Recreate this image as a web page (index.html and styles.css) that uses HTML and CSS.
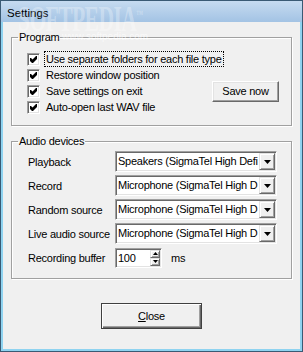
FILE: index.html
```html
<!DOCTYPE html>
<html lang="en">
<head>
    <meta charset="UTF-8">
    <title>Settings</title>
    <link rel="stylesheet" href="styles.css">
</head>
<body>
    <div class="window">
        <div class="titlebar"><span class="title">Settings</span></div>
        <div class="frame">
            <div class="client">
                <fieldset class="group">
                    <legend>Program</legend>
                    <div class="program-body">
                        <label class="check wide">
                            <span class="box"><svg width="7" height="7" viewBox="0 0 7 7"><polygon points="0,2 1,2 2.5,3.5 6,0 7,0 7,3 3,7 2,7 0,5" fill="#000"/></svg></span>
                            <span class="check-text focus">Use separate folders for each file type</span>
                        </label>
                        <label class="check">
                            <span class="box"><svg width="7" height="7" viewBox="0 0 7 7"><polygon points="0,2 1,2 2.5,3.5 6,0 7,0 7,3 3,7 2,7 0,5" fill="#000"/></svg></span>
                            <span class="check-text">Restore window position</span>
                        </label>
                        <label class="check">
                            <span class="box"><svg width="7" height="7" viewBox="0 0 7 7"><polygon points="0,2 1,2 2.5,3.5 6,0 7,0 7,3 3,7 2,7 0,5" fill="#000"/></svg></span>
                            <span class="check-text">Save settings on exit</span>
                        </label>
                        <label class="check">
                            <span class="box"><svg width="7" height="7" viewBox="0 0 7 7"><polygon points="0,2 1,2 2.5,3.5 6,0 7,0 7,3 3,7 2,7 0,5" fill="#000"/></svg></span>
                            <span class="check-text">Auto-open last WAV file</span>
                        </label>
                        <button class="btn save">Save now</button>
                    </div>
                </fieldset>

                <fieldset class="group audio">
                    <legend>Audio devices</legend>
                    <div class="audio-body">
                        <span class="field-label">Playback</span>
                        <div class="combo">
                            <span class="combo-text">Speakers (SigmaTel High Defi</span>
                            <span class="combo-btn"><svg width="7" height="4" viewBox="0 0 7 4"><polygon points="0,0 7,0 3.5,4" fill="#000"/></svg></span>
                        </div>

                        <span class="field-label">Record</span>
                        <div class="combo">
                            <span class="combo-text">Microphone (SigmaTel High D</span>
                            <span class="combo-btn"><svg width="7" height="4" viewBox="0 0 7 4"><polygon points="0,0 7,0 3.5,4" fill="#000"/></svg></span>
                        </div>

                        <span class="field-label">Random source</span>
                        <div class="combo">
                            <span class="combo-text">Microphone (SigmaTel High D</span>
                            <span class="combo-btn"><svg width="7" height="4" viewBox="0 0 7 4"><polygon points="0,0 7,0 3.5,4" fill="#000"/></svg></span>
                        </div>

                        <span class="field-label">Live audio source</span>
                        <div class="combo">
                            <span class="combo-text">Microphone (SigmaTel High D</span>
                            <span class="combo-btn"><svg width="7" height="4" viewBox="0 0 7 4"><polygon points="0,0 7,0 3.5,4" fill="#000"/></svg></span>
                        </div>

                        <span class="field-label">Recording buffer</span>
                        <div class="spin-row">
                            <div class="spin">
                                <span class="spin-text">100</span>
                                <span class="spin-btns">
                                    <span class="spin-btn"><svg width="5" height="3" viewBox="0 0 5 3"><polygon points="2.5,0 5,3 0,3" fill="#000"/></svg></span>
                                    <span class="spin-btn"><svg width="5" height="3" viewBox="0 0 5 3"><polygon points="0,0 5,0 2.5,3" fill="#000"/></svg></span>
                                </span>
                            </div>
                            <span class="unit">ms</span>
                        </div>
                    </div>
                </fieldset>

                <div class="actions">
                    <button class="btn default"><u>C</u>lose</button>
                </div>
            </div>
        </div>

        <!-- watermark from the screenshot -->
        <div class="watermark">SOFTPEDIA<sup>™</sup></div>
        <div class="watermark-url">www.softpedia.com</div>
    </div>
</body>
</html>
```

FILE: styles.css
```css
* {
    box-sizing: border-box;
}

body {
    margin: 0;
    width: 303px;
    height: 352px;
    overflow: hidden;
    font-family: "Liberation Sans", Arial, sans-serif;
    font-size: 11px;
    letter-spacing: -0.25px;
    color: #000;
    background: #f0f0f0;
}

.window {
    position: relative;
    width: 303px;
    height: 352px;
    display: flex;
    flex-direction: column;
    border: 1px solid #3a5a74;
    background: #8fd3f0;
}

.titlebar {
    height: 21px;
    padding: 5px 0 0 6px;
    background: linear-gradient(#c6dbf0, #a3c3e4);
}

.title {
    font-size: 11.5px;
    letter-spacing: 0;
    line-height: 14px;
}

.frame {
    flex: 1;
    display: flex;
    border: 2px solid #8fd3f0;
    border-top: none;
}

.client {
    flex: 1;
    background: #f0f0f0;
    padding: 8px 8px 0;
}

/* group boxes */
.group {
    margin: 0;
    padding: 0;
    min-width: 0;
    border: 1px solid #a0a0a0;
    box-shadow: 1px 1px 0 #fff, inset 1px 1px 0 #fff;
}

.group legend {
    margin-left: 6px;
    padding: 0 1px;
    line-height: 14px;
}

.audio {
    margin-top: 8px;
}

.program-body {
    display: grid;
    grid-template-columns: 1fr auto;
    grid-template-rows: repeat(4, 16px);
    padding: 7px 0 10px 15px;
}

.check {
    grid-column: 1;
    display: flex;
    align-items: center;
    white-space: nowrap;
}

.check.wide {
    grid-column: 1 / -1;
}

.box {
    width: 13px;
    height: 13px;
    flex: none;
    display: flex;
    align-items: center;
    justify-content: center;
    background: #fff;
    border: 1px solid;
    border-color: #a0a0a0 #fff #fff #a0a0a0;
    box-shadow: inset 1px 1px 0 #696969, inset -1px -1px 0 #e3e3e3;
}

.check-text {
    margin-left: 4px;
    padding: 0 1px;
    line-height: 14px;
    border: 1px dotted transparent;
}

.check-text.focus {
    border-color: #000;
}

/* buttons */
.btn {
    font-family: inherit;
    font-size: 11px;
    letter-spacing: -0.25px;
    color: #000;
    background: #f0f0f0;
    padding: 0;
    border: 1px solid;
    border-color: #fff #696969 #696969 #fff;
    box-shadow: inset -1px -1px 0 #a0a0a0, inset 1px 1px 0 #e3e3e3;
}

.save {
    grid-column: 2;
    grid-row: 3;
    align-self: center;
    width: 67px;
    height: 21px;
    margin-right: 12px;
}

.actions {
    display: flex;
    justify-content: center;
    margin-top: 24px;
}

.default {
    width: 101px;
    height: 26px;
    border: 1px solid #404040;
    box-shadow: inset 1px 1px 0 #fff, inset -1px -1px 0 #696969, inset -2px -2px 0 #a0a0a0;
}

/* audio rows */
.audio-body {
    display: grid;
    grid-template-columns: 87px 162px;
    grid-auto-rows: 21px;
    row-gap: 3px;
    align-items: center;
    padding: 3px 0 10px 16px;
}

.field-label {
    white-space: nowrap;
}

.combo,
.spin {
    display: flex;
    height: 21px;
    background: #fff;
    border: 1px solid;
    border-color: #a0a0a0 #fff #fff #a0a0a0;
    box-shadow: inset 1px 1px 0 #696969, inset -1px -1px 0 #e3e3e3;
    padding: 1px;
}

.combo-text,
.spin-text {
    flex: 1;
    overflow: hidden;
    white-space: nowrap;
    padding-left: 1px;
    line-height: 17px;
}

.combo-btn,
.spin-btn {
    display: flex;
    align-items: center;
    justify-content: center;
    background: #f0f0f0;
    border: 1px solid;
    border-color: #e3e3e3 #696969 #696969 #e3e3e3;
    box-shadow: inset 1px 1px 0 #fff, inset -1px -1px 0 #a0a0a0;
}

.combo-btn {
    width: 16px;
}

.spin-row {
    display: flex;
    align-items: center;
}

.spin {
    width: 47px;
    height: 20px;
}

.spin-btns {
    display: flex;
    flex-direction: column;
    width: 10px;
}

.spin-btn {
    flex: 1;
}

.unit {
    margin-left: 9px;
}

/* faint watermark over the title bar */
.watermark {
    position: absolute;
    left: 17px;
    top: -3px;
    font-family: "Liberation Serif", serif;
    font-weight: bold;
    font-size: 36px;
    letter-spacing: -1px;
    color: rgba(255, 255, 255, 0.3);
    transform: scaleX(0.6);
    transform-origin: left top;
    pointer-events: none;
}

.watermark sup {
    font-size: 11px;
}

.watermark-url {
    position: absolute;
    left: 61px;
    top: 30px;
    font-size: 10px;
    letter-spacing: 0;
    color: rgba(255, 255, 255, 0.6);
    pointer-events: none;
}
```
